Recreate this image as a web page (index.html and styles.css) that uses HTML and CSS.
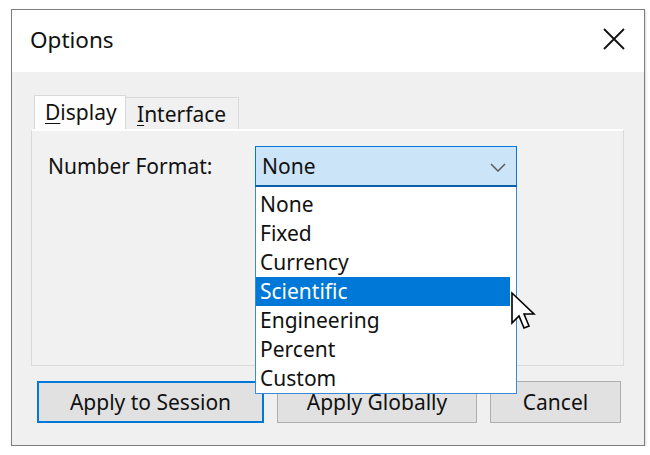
FILE: index.html
```html
<!DOCTYPE html>
<html>
<head>
<meta charset="utf-8">
<title>Options</title>
<link rel="stylesheet" href="styles.css">
</head>
<body>
<div class="window">
  <div class="titlebar">
    <span class="title">Options</span>
    <span class="close">
      <svg width="22" height="22" viewBox="0 0 22 22"><path d="M1 1 L21 21 M21 1 L1 21" stroke="#111" stroke-width="1.8" fill="none"/></svg>
    </span>
  </div>
  <div class="body">
    <div class="tabs">
      <div class="tab active"><u>D</u>isplay</div>
      <div class="tab"><u>I</u>nterface</div>
    </div>
    <div class="panel">
      <div class="row">
        <span class="label">Number Format:</span>
        <div class="combo-wrap">
          <div class="combo">
            <span>None</span>
            <svg class="chev" width="16" height="9" viewBox="0 0 16 9"><path d="M1 1 L8 8 L15 1" stroke="#5a5a5a" stroke-width="1.5" fill="none"/></svg>
          </div>
          <ul class="list">
            <li>None</li>
            <li>Fixed</li>
            <li>Currency</li>
            <li class="sel">Scientific</li>
            <li>Engineering</li>
            <li>Percent</li>
            <li>Custom</li>
          </ul>
          <svg class="cursor" width="28" height="42" viewBox="0 0 28 42"><path d="M2 2 L2 32 L9 25 L14 37 L19 35 L14 23 L24 23 Z" fill="#fff" stroke="#000" stroke-width="1.6" stroke-linejoin="miter"/></svg>
        </div>
      </div>
    </div>
    <div class="buttons">
      <button class="btn focus w1">Apply to Session</button>
      <button class="btn w2">Apply Globally</button>
      <button class="btn w3">Cancel</button>
    </div>
  </div>
</div>
</body>
</html>
```
FILE: styles.css
```css
* { box-sizing: border-box; }
html, body { margin: 0; padding: 0; background: #fff; }
body {
  font-family: "Noto Sans", "Open Sans", sans-serif;
  font-size: 21px;
  color: #111;
}
.window {
  margin: 9px 0 0 11px;
  width: 634px;
  height: 437px;
  border: 1px solid #7d7d7d;
  box-shadow: 1px 1px 2px rgba(0,0,0,0.15);
  display: flex;
  flex-direction: column;
}
.titlebar {
  height: 62px;
  background: #fff;
  display: flex;
  align-items: center;
  justify-content: space-between;
  padding-left: 18px;
  padding-right: 19px;
}
.title { font-size: 22.5px; line-height: 1; margin-top: -2px; }
.close { display: flex; width: 22px; height: 22px; margin-top: -4px; }
.body {
  flex: 1;
  background: #f0f0f0;
  padding: 23px 20px 0 19px;
}
.tabs { display: flex; align-items: flex-end; padding-left: 3px; height: 34px; }
.tab {
  height: 32px;
  padding: 0 8px 0 10px;
  border: 1px solid #d9d9d9;
  border-bottom: none;
  background: #f0f0f0;
  display: flex;
  align-items: center;
  line-height: 1;
  padding-top: 2px;
}
.tab.active {
  height: 34px;
  background: #fdfdfd;
  width: 92px;
  padding-top: 0;
}
.tab + .tab { width: 113px; border-left: none; padding-left: 11px; }
.tab u { text-underline-offset: 3px; text-decoration-thickness: 1px; }
.panel {
  height: 237px;
  border: 1px solid #dadada;
  border-top: 2px solid #fff;
  background: #f1f1f1;
  padding: 15px 0 0 16px;
}
.row { display: flex; align-items: flex-start; }
.label { width: 207px; line-height: 41px; }
.combo-wrap { position: relative; width: 262px; }
.combo {
  height: 41px;
  background: #cce4f7;
  border: 1px solid #0078d7;
  border-bottom: 2px solid #0a5fa8;
  display: flex;
  align-items: center;
  justify-content: space-between;
  padding: 0 10px 0 6px;
  line-height: 1;
}
.chev { margin-top: 2px; }
.list {
  position: absolute;
  left: 0;
  top: 41px;
  width: 262px;
  margin: 0;
  padding: 3px 0 0 0;
  list-style: none;
  background: #fff;
  border: 1px solid #3a8ad6;
  border-top: none;
  z-index: 5;
}
.list li {
  height: 29px;
  line-height: 29px;
  padding-left: 4px;
  margin-right: 6px;
}
.list li.sel { background: #0078d7; color: #fff; }
.cursor { position: absolute; left: 255px; top: 145px; z-index: 6; }
.buttons {
  display: flex;
  gap: 13px;
  margin-top: 15px;
  padding-left: 6px;
}
.btn {
  font: inherit;
  color: #111;
  height: 42px;
  background: #e1e1e1;
  border: 1px solid #adadad;
  padding: 0;
  line-height: 1;
}
.btn.focus { border: 2px solid #0078d7; }
.w1 { width: 227px; }
.w2 { width: 200px; }
.w3 { width: 131px; }
```
